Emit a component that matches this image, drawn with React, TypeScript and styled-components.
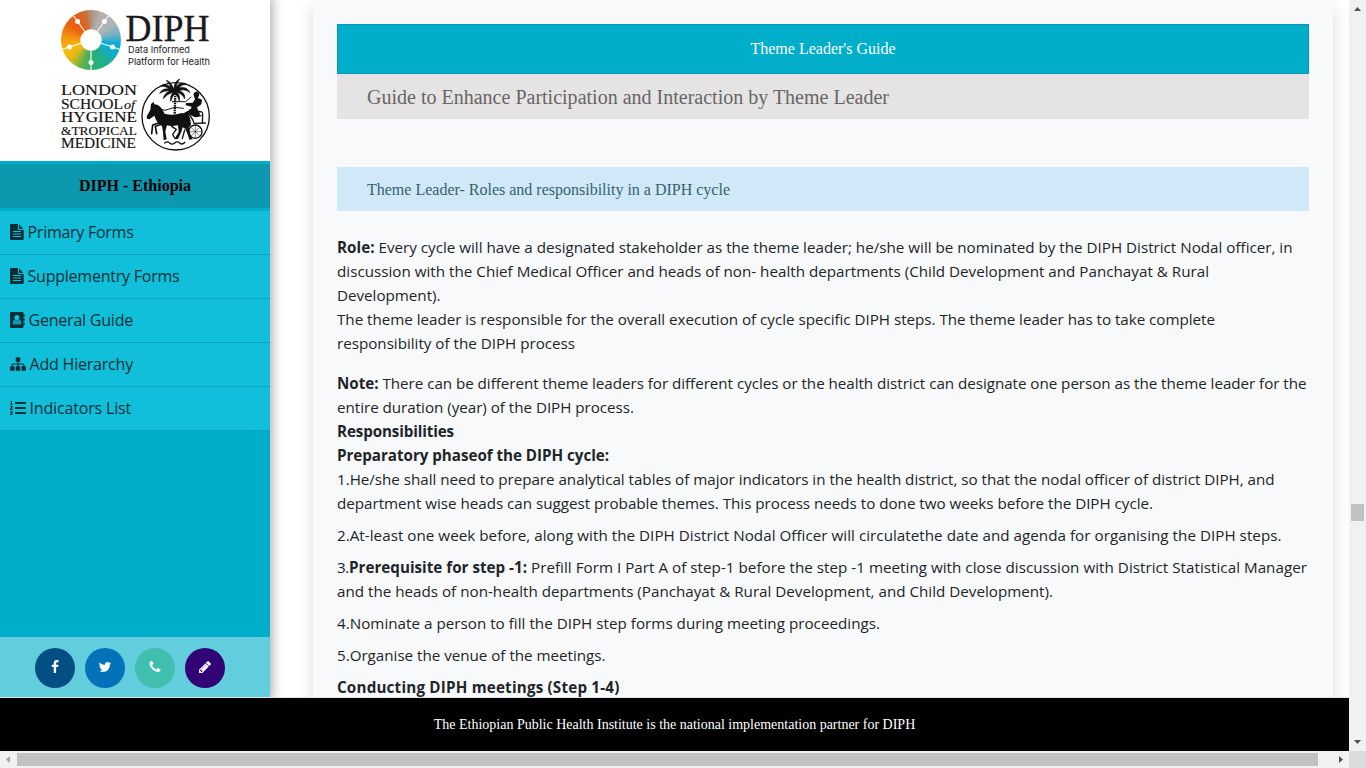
import React, { useLayoutEffect, useRef } from 'react';
import styled, { createGlobalStyle } from 'styled-components';
import { FaListOl } from 'react-icons/fa';

const serif = '"Liberation Serif", "Times New Roman", serif';
const sans = '"Open Sans", "Noto Sans", sans-serif';

const GlobalStyle = createGlobalStyle`
  * { box-sizing: border-box; }
  body { margin: 0; overflow: hidden; background: #fff; color: #212529; font-family: ${sans}; }
`;

const Frame = styled.div`
  display: grid;
  grid-template-columns: 1349px 17px;
  grid-template-rows: 751px 17px;
  width: 1366px;
  height: 768px;
`;
const Page = styled.div`
  display: flex;
  flex-direction: column;
  overflow: hidden;
`;
const Columns = styled.div`
  display: flex;
  height: 697px;
  overflow: hidden;
`;
const Sidebar = styled.aside`
  position: relative;
  display: flex;
  flex-direction: column;
  flex: none;
  width: 270px;
  background: #00aeca;
  box-shadow: 0 0 10px 3px rgba(0, 0, 0, 0.3);
`;
const Logos = styled.div`
  height: 161px;
  flex: none;
  display: flex;
  flex-direction: column;
  padding: 9px 0 0 60px;
  background: #fff;
`;
const DiphLogo = styled.div`
  display: flex;
  height: 67px;
`;
const Wheel = styled.div`
  width: 60px;
  height: 60px;
  margin: 0.5px 0 0 0.7px;
  border-radius: 50%;
  background: conic-gradient(#ad8f7c 0deg, #b4b0ae 20deg, #aeb3b6 55deg, #6fb1c4 78deg, #0cadd6 98deg, #0cafcd 118deg, #22ad93 145deg, #2bb16b 178deg, #62b24b 200deg, #e3bb16 228deg, #fbb80d 250deg, #f6920f 278deg, #ea6512 302deg, #e35d17 330deg, #c9703f 350deg, #ad8f7c 360deg);
`;
const SidebarTitle = styled.div`
  height: 44px;
  margin: 3px 0;
  flex: none;
  background: #0c99af;
  color: #000;
  font: bold 16px/44px ${serif};
  text-align: center;
`;
const MenuItem = styled.a`
  display: flex;
  align-items: center;
  gap: 3.5px;
  height: 44px;
  padding: 0 0 2px 10px;
  background: #12bfda;
  border-bottom: 1px solid #0ba4bf;
  color: #052f37;
  font-size: 16px;
  line-height: 24px;
`;
const Social = styled.div`
  display: flex;
  gap: 10px;
  height: 60px;
  margin-top: auto;
  padding: 11px 35px;
  background: #62cddd;
`;
const SocialButton = styled.a<{ $color: string }>`
  display: flex;
  align-items: center;
  justify-content: center;
  width: 40px;
  height: 40px;
  padding-bottom: 2px;
  border-radius: 50%;
  color: #fff;
  background: ${(p) => p.$color};
`;
const Card = styled.main`
  flex: none;
  width: 1020px;
  height: 760px;
  margin-left: 43px;
  padding: 24px;
  background: #f8f9fb;
  box-shadow: 0 8px 16px rgba(0, 0, 0, 0.15);
`;
const Banner = styled.h1`
  height: 50px;
  margin: 0;
  border: 1px solid #0799b1;
  background: #00aeca;
  color: #fff;
  font: 16px/48px ${serif};
  text-align: center;
`;
const SubBanner = styled.h2`
  height: 45px;
  margin: 0 0 48px;
  padding-left: 30px;
  background: #e6e3e4;
  color: #666;
  font: 20px/47px ${serif};
`;
const SectionBar = styled.h3`
  height: 44px;
  margin: 0 0 24px;
  padding-left: 30px;
  background: #d0e8f7;
  color: #36626f;
  font: 16px/45px ${serif};
`;
const Paragraph = styled.div<{ $gap?: number }>`
  margin-bottom: ${(p) => p.$gap ?? 0}px;
`;
const Line = styled.div`
  display: flex;
  gap: 4px;
  height: 24px;
  font-size: 15.2px;
  line-height: 24px;
`;
const FitText = styled.span<{ $bold?: boolean; $tight?: boolean }>`
  white-space: nowrap;
  font-weight: ${(p) => (p.$bold ? 700 : 'inherit')};
  margin-right: ${(p) => (p.$tight ? '-4px' : 0)};
`;
const Footer = styled.footer`
  height: 54px;
  flex: none;
  border-top: 1px solid #dfe3e6;
  background: #000;
  color: #fff;
  font: 14px/53px ${serif};
  text-align: center;
`;
const VerticalBar = styled.div`
  display: flex;
  flex-direction: column;
  align-items: center;
  justify-content: space-between;
  background: #f1f1f1;
`;
const VerticalThumb = styled.div`
  width: 13px;
  height: 17px;
  margin-top: 487px;
  margin-bottom: auto;
  background: #c1c1c1;
`;
const HorizontalBar = styled.div`
  display: flex;
  align-items: center;
  background: #f1f1f1;
`;
const HorizontalThumb = styled.div`
  width: 1301px;
  height: 13px;
  margin-right: auto;
  background: #c1c1c1;
`;
const Corner = styled.div`
  background: #dcdcdc;
`;
const Glyph = styled.svg`
  display: block;
  flex: none;
  overflow: visible;
`;

/* Text tracked so that it spans a given measure. */
function Fit({ width, bold, tight, children }: { width: number; bold?: boolean; tight?: boolean; children: string }) {
  const ref = useRef<HTMLSpanElement>(null);
  useLayoutEffect(() => {
    const el = ref.current;
    if (!el) return;
    el.style.letterSpacing = '0px';
    const natural = el.getBoundingClientRect().width;
    el.style.letterSpacing = `${(width - natural) / children.length}px`;
  }, [width, children]);
  return <FitText ref={ref} $bold={bold} $tight={tight}>{children}</FitText>;
}

const icons = {
  facebook: 'M1343 12v264h-157q-86 0-116 36t-30 108v189h293l-39 296h-254v759h-306v-759h-255v-296h255v-218q0-186 104-288.5t277-102.5q147 0 228 12z',
  twitter: 'M1684 408q-67 98-162 167 1 14 1 42 0 130-38 259.5t-115.5 248.5-184.5 210.5-258 146-323 54.5q-271 0-496-145 35 4 78 4 225 0 401-138-105-2-188-64.5t-114-159.5q33 5 61 5 43 0 85-11-112-23-185.5-111.5t-73.5-205.5v-4q68 38 146 41-66-44-105-115t-39-154q0-88 44-163 121 149 294.5 238.5t371.5 99.5q-8-38-8-74 0-134 94.5-228.5t228.5-94.5q140 0 236 102 109-21 205-78-37 115-142 178 93-10 186-50z',
  phone: 'M1600 1240q0 27-10 70.5t-21 68.5q-21 50-122 106-94 51-186 51-27 0-53-3.5t-57.5-12.5-47-14.5-55.5-20.5-49-18q-98-35-175-83-127-79-264-216t-216-264q-48-77-83-175-3-9-18-49t-20.5-55.5-14.5-47-12.5-57.5-3.5-53q0-92 51-186 56-101 106-122 25-11 68.5-21t70.5-10q14 0 21 3 18 6 53 76 11 19 30 54t35 63.5 31 53.5q3 4 17.5 25t21.5 35.5 7 28.5q0 20-28.5 50t-62 55-62 53-28.5 46q0 9 5 22.5t8.5 20.5 14 24 11.5 19q76 137 174 235t235 174q2 1 19 11.5t24 14 20.5 8.5 22.5 5q18 0 46-28.5t53-62 55-62 50-28.5q14 0 28.5 7t35.5 21.5 25 17.5q25 15 53.5 31t63.5 35 54 30q70 35 76 53 3 7 3 21z',
  pencil: 'M491 1536l91-91-235-235-91 91v107h128v128h107zm523-928q0-22-22-22-10 0-17 7l-542 542q-7 7-7 17 0 22 22 22 10 0 17-7l542-542q7-7 7-17zm-54-192l416 416-832 832h-416v-416zm683 96q0 53-37 90l-166 166-416-416 166-165q36-38 90-38 53 0 91 38l235 234q37 39 37 91z',
  sitemap: 'M1792 1248v320q0 40-28 68t-68 28h-320q-40 0-68-28t-28-68v-320q0-40 28-68t68-28h96v-192h-512v192h96q40 0 68 28t28 68v320q0 40-28 68t-68 28h-320q-40 0-68-28t-28-68v-320q0-40 28-68t68-28h96v-192h-512v192h96q40 0 68 28t28 68v320q0 40-28 68t-68 28h-320q-40 0-68-28t-28-68v-320q0-40 28-68t68-28h96v-192q0-52 38-90t90-38h512v-192h-96q-40 0-68-28t-28-68v-320q0-40 28-68t68-28h320q40 0 68 28t28 68v320q0 40-28 68t-68 28h-96v192h512q52 0 90 38t38 90v192h96q40 0 68 28t28 68z',
};

const FileIcon = () => (
  <Glyph width="14" height="16" viewBox="0 0 14 16" fill="currentColor">
    <path fillRule="evenodd" d="M1 0h7v5q0 1 1 1h4.700v9.200q0 .8-.8.8H.8q-.8 0-.8-.8V.8Q0 0 .8 0zM9 .3 13.400 4.900H9zM3 7v1h8V7zm0 2.500v1h8v-1zM3 12v1h8v-1z" />
  </Glyph>
);
const BookIcon = () => (
  <Glyph width="15" height="16" viewBox="0 0 15 16" fill="currentColor">
    <path d="M1 0h11.500q1 0 1 1v1.500h1.200v2.200h-1.200v1.800h1.200v2.200h-1.200v1.800h1.200v2.200h-1.200V15q0 1-1 1H1q-1 0-1-1V1q0-1 1-1z" />
    <g fill="#12bfda">
      <path d="M4.600 7.400Q2.600 8 2.600 11.600q0 .9.900.9h6.800q.9 0 .9-.9 0-3.600-2-4.200-2.300 2-4.600 0z" opacity=".75" />
      <ellipse cx="6.900" cy="5.600" rx="2.500" ry="2.700" />
    </g>
  </Glyph>
);
const SitemapIcon = () => (
  <Glyph width="16" height="16" viewBox="0 0 1792 1792" fill="currentColor"><path d={icons.sitemap} /></Glyph>
);

const menu = [
  { label: 'Primary Forms', width: 106, icon: <FileIcon /> },
  { label: 'Supplementry Forms', width: 152, icon: <FileIcon /> },
  { label: 'General Guide', width: 104.5, icon: <BookIcon /> },
  { label: 'Add Hierarchy', width: 103.5, icon: <SitemapIcon /> },
  { label: 'Indicators List', width: 101.5, icon: <FaListOl size={16} /> },
];
const social = [
  { color: '#034f84', d: icons.facebook },
  { color: '#0472b9', d: icons.twitter },
  { color: '#40bfae', d: icons.phone },
  { color: '#320374', d: icons.pencil },
];

const WheelSpokes = () => (
  <Glyph width="60" height="60" viewBox="0 0 60 60" stroke="#fff" fill="#fff">
    <path strokeWidth="1.100" d="M30 30 12.400 5.700M30 30 47.600 5.700M30 30 58.500 39.300M30 30V60M30 30 1.500 39.300" />
    <circle cx="30" cy="30" r="10.300" />
    <g stroke="none">
      <circle cx="16.600" cy="11.500" r="2.500" /><circle cx="43.400" cy="11.500" r="2.500" />
      <circle cx="51.500" cy="37" r="2.500" /><circle cx="30" cy="52.600" r="2.500" /><circle cx="8.500" cy="37" r="2.500" />
    </g>
  </Glyph>
);
const DiphWords = () => (
  <Glyph width="90" height="67" viewBox="0 0 90 67" fill="#1b1b1b">
    <g fontFamily='"Liberation Serif", serif' fontSize="37.500" stroke="#1b1b1b" strokeWidth=".3">
      <text x="4.500" y="32" textLength="84" lengthAdjust="spacingAndGlyphs">DIPH</text>
    </g>
    <g fontFamily="Inter, sans-serif" fontSize="9.300">
      <text x="7" y="44" textLength="62" lengthAdjust="spacingAndGlyphs">Data Informed</text>
      <text x="7" y="56" textLength="82" lengthAdjust="spacingAndGlyphs">Platform for Health</text>
    </g>
  </Glyph>
);
const SchoolLogo = () => (
  <Glyph width="155" height="78" viewBox="60 76 155 78" fill="#111">
    <g fontFamily='"Liberation Serif", serif' stroke="#111" strokeWidth=".15">
      <text x="61" y="95" fontSize="14.500" textLength="76" lengthAdjust="spacingAndGlyphs">LONDON</text>
      <text x="61" y="108.500" fontSize="14" textLength="62" lengthAdjust="spacingAndGlyphs">SCHOOL</text>
      <text x="124" y="108.500" fontSize="13" fontStyle="italic" textLength="11" lengthAdjust="spacingAndGlyphs">of</text>
      <text x="61" y="122" fontSize="14.500" textLength="76" lengthAdjust="spacingAndGlyphs">HYGIENE</text>
      <text x="61" y="134.700" fontSize="13.500" textLength="76" lengthAdjust="spacingAndGlyphs">&amp;TROPICAL</text>
      <text x="61" y="148" fontSize="14.500" textLength="75" lengthAdjust="spacingAndGlyphs">MEDICINE</text>
    </g>
    <g transform="translate(135 74) scale(.33333)" fill="#111" stroke="#111" strokeLinecap="round" strokeLinejoin="round">
      <circle cx="122" cy="127" r="101" fill="none" strokeWidth="4" />
      <path strokeWidth="2" d="M117 46 Q107 22 94 19 Q104 31 108 40 Q90 25 77 36 Q93 36 103 45 Q82 42 74 58 Q89 48 105 51 Q87 58 85 74 Q97 60 114 54 Q104 69 107 82 Q112 67 120 58 Q130 69 133 81 Q137 66 126 55 Q143 60 149 74 Q152 56 132 50 Q150 43 165 56 Q156 36 132 42 Q141 30 156 31 Q138 19 123 40 Q126 25 134 15 Q117 22 117 46Z" />
      <path fill="none" strokeWidth="7" strokeLinecap="butt" strokeDasharray="5 2" d="M121 58 119 120" />
      <path stroke="none" d="M48 90 56 84 58 91 Q76 91 89 119 Q112 126 141 117 Q163 118 166 136 L168 152 161 162 167 184 173 196 163 197 159 184 151 164 143 160 139 174 129 195 118 196 131 174 129 154 Q108 158 96 154 L91 172 95 196 86 199 84 174 81 156 Q65 148 58 125 L43 136 36 134 35 127 46 108 Z" />
      <path fill="none" strokeWidth="5" d="M79 151 61 157 65 179M73 146 53 153 50 179" />
      <path fill="none" strokeWidth="3" d="M65 103 90 109 119 100 145 103M112 83h40l16-14" />
      <path stroke="none" d="M175 61q4-10 12-8 8 4 5 13l-4 5 13 6-2 14-15 11 10 14 1 9-15 5-16-8-13 3-4-8 20-11 3-8-18-4 1-7 20-1 7-10z" />
      <path fill="none" strokeWidth="4" d="M160 121q12 8 17 27l34-1M187 113q18-3 16 10l-1 24M165 108l22-3M183 128l15-3" />
      <circle cx="181" cy="173" r="20" fill="none" strokeWidth="4" />
      <path d="M181 155v36M164 173h34M169 161l24 24M193 161l-24 24" fill="none" strokeWidth="1.500" />
      <path d="M110 157 124 166 113 181 119 192M149 168 142 194M89 207q8-7 15 0t15 0 15 0 16-2" fill="none" strokeWidth="4" />
    </g>
  </Glyph>
);

export default function App() {
  return (
    <>
      <GlobalStyle />
      <Frame>
        <Page>
          <Columns>
            <Sidebar>
              <Logos>
                <DiphLogo><Wheel><WheelSpokes /></Wheel><DiphWords /></DiphLogo>
                <SchoolLogo />
              </Logos>
              <SidebarTitle><Fit width={112}>DIPH - Ethiopia</Fit></SidebarTitle>
              {menu.map((m) => <MenuItem key={m.label}>{m.icon}<Fit width={m.width}>{m.label}</Fit></MenuItem>)}
              <Social>
                {social.map((s) => (
                  <SocialButton key={s.color} $color={s.color}>
                    <Glyph width="14" height="14" viewBox="0 0 1792 1792" fill="currentColor"><path d={s.d} /></Glyph>
                  </SocialButton>
                ))}
              </Social>
            </Sidebar>
            <Card>
              <Banner><Fit width={145}>Theme Leader's Guide</Fit></Banner>
              <SubBanner><Fit width={522}>Guide to Enhance Participation and Interaction by Theme Leader</Fit></SubBanner>
              <SectionBar><Fit width={363}>Theme Leader- Roles and responsibility in a DIPH cycle</Fit></SectionBar>
              <Paragraph $gap={16}>
                <Line><Fit width={37.5} bold>Role:</Fit><Fit width={914}>Every cycle will have a designated stakeholder as the theme leader; he/she will be nominated by the DIPH District Nodal officer, in</Fit></Line>
                <Line><Fit width={872}>discussion with the Chief Medical Officer and heads of non- health departments (Child Development and Panchayat &amp; Rural</Fit></Line>
                <Line><Fit width={103.5}>Development).</Fit></Line>
                <Line><Fit width={878}>The theme leader is responsible for the overall execution of cycle specific DIPH steps. The theme leader has to take complete</Fit></Line>
                <Line><Fit width={238}>responsibility of the DIPH process</Fit></Line>
              </Paragraph>
              <Paragraph>
                <Line><Fit width={41.5} bold>Note:</Fit><Fit width={924}>There can be different theme leaders for different cycles or the health district can designate one person as the theme leader for the</Fit></Line>
                <Line><Fit width={297}>entire duration (year) of the DIPH process.</Fit></Line>
                <Line><Fit width={117} bold>Responsibilities</Fit></Line>
                <Line><Fit width={272} bold>Preparatory phaseof the DIPH cycle:</Fit></Line>
              </Paragraph>
              <Paragraph $gap={8}>
                <Line><Fit width={937.5}>1.He/she shall need to prepare analytical tables of major indicators in the health district, so that the nodal officer of district DIPH, and</Fit></Line>
                <Line><Fit width={816}>department wise heads can suggest probable themes. This process needs to done two weeks before the DIPH cycle.</Fit></Line>
              </Paragraph>
              <Paragraph $gap={8}>
                <Line><Fit width={944.5}>2.At-least one week before, along with the DIPH District Nodal Officer will circulatethe date and agenda for organising the DIPH steps.</Fit></Line>
              </Paragraph>
              <Paragraph $gap={8}>
                <Line><Fit width={12} tight>3.</Fit><Fit width={178} bold>Prerequisite for step -1:</Fit><Fit width={776}>Prefill Form I Part A of step-1 before the step -1 meeting with close discussion with District Statistical Manager</Fit></Line>
                <Line><Fit width={716}>and the heads of non-health departments (Panchayat &amp; Rural Development, and Child Development).</Fit></Line>
              </Paragraph>
              <Paragraph $gap={8}><Line><Fit width={543}>4.Nominate a person to fill the DIPH step forms during meeting proceedings.</Fit></Line></Paragraph>
              <Paragraph $gap={8}><Line><Fit width={268.5}>5.Organise the venue of the meetings.</Fit></Line></Paragraph>
              <Line><Fit width={282.500} bold>Conducting DIPH meetings (Step 1-4)</Fit></Line>
            </Card>
          </Columns>
          <Footer><Fit width={481.5}>The Ethiopian Public Health Institute is the national implementation partner for DIPH</Fit></Footer>
        </Page>
        <VerticalBar>
          <Glyph width="17" height="17" fill="#505050"><path d="M5 11h7L8.500 7z" /></Glyph>
          <VerticalThumb />
          <Glyph width="17" height="17" fill="#505050"><path d="M5 6h7L8.500 10z" /></Glyph>
        </VerticalBar>
        <HorizontalBar>
          <Glyph width="17" height="17" fill="#a3a3a3"><path d="M10 5v7L6 8.500z" /></Glyph>
          <HorizontalThumb />
          <Glyph width="17" height="17" fill="#505050"><path d="M7 5v7l4-3.500z" /></Glyph>
        </HorizontalBar>
        <Corner />
      </Frame>
    </>
  );
}
